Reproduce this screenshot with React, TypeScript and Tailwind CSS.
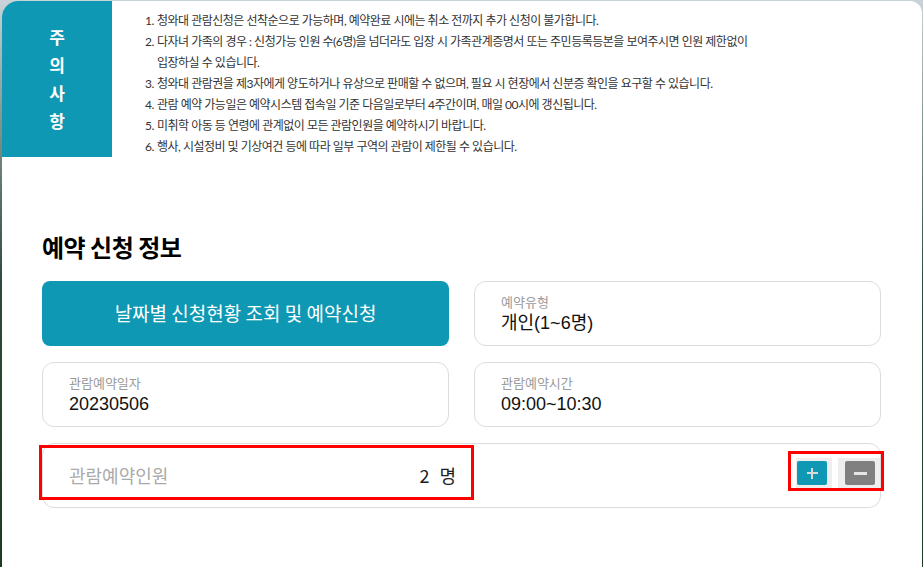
import React from "react";

const notices = [
  "청와대 관람신청은 선착순으로 가능하며, 예약완료 시에는 취소 전까지 추가 신청이 불가합니다.",
  "다자녀 가족의 경우 : 신청가능 인원 수(6명)을 넘더라도 입장 시 가족관계증명서 또는 주민등록등본을 보여주시면 인원 제한없이 입장하실 수 있습니다.",
  "청와대 관람권을 제3자에게 양도하거나 유상으로 판매할 수 없으며, 필요 시 현장에서 신분증 확인을 요구할 수 있습니다.",
  "관람 예약 가능일은 예약시스템 접속일 기준 다음일로부터 4주간이며, 매일 00시에 갱신됩니다.",
  "미취학 아동 등 연령에 관계없이 모든 관람인원을 예약하시기 바랍니다.",
  "행사, 시설정비 및 기상여건 등에 따라 일부 구역의 관람이 제한될 수 있습니다.",
];

function InfoCard({ label, value }: { label: string; value: string }) {
  return (
    <div className="h-[65px] rounded-xl border border-[#dcdcdc] bg-white pl-[26px] pt-[11px]">
      <div className="text-[13px] leading-[18px] text-[#9a9a9a]">{label}</div>
      <div
        className="text-[18px] leading-[25px] text-[#111]"
        style={{ fontFamily: '"Liberation Sans", "Noto Sans CJK KR", sans-serif' }}
      >
        {value}
      </div>
    </div>
  );
}

export default function App() {
  return (
    <div
      className="h-[567px] w-[923px] overflow-hidden bg-gradient-to-b from-[#c9d3d8] via-[#2f4a3a] to-[#1f3a22] pl-[2px] pr-[1px] pt-[1px]"
      style={{ fontFamily: '"Noto Sans CJK KR", "Liberation Sans", sans-serif' }}
    >
      <div className="h-full overflow-hidden rounded-tl-[16px] rounded-tr-[12px] bg-white">
        {/* 주의사항 */}
        <div className="flex">
          <div className="flex h-[156px] w-[110px] shrink-0 flex-col items-center justify-center bg-[#0e98b3] text-[17px] font-bold leading-[28px] text-white">
            <span>주</span>
            <span>의</span>
            <span>사</span>
            <span>항</span>
          </div>
          <ol
            className="pl-[33px] pt-[9px] text-[12px] leading-[21px] tracking-[-0.5px] text-[#333]"
            style={{ fontFamily: 'Lato, "Noto Sans CJK KR", sans-serif' }}
          >
            {notices.map((n, i) => (
              <li key={i} className="flex">
                <span className="w-[12px] shrink-0">{i + 1}.</span>
                <span className="max-w-[600px]">{n}</span>
              </li>
            ))}
          </ol>
        </div>

        {/* 예약 신청 정보 */}
        <div className="pl-[40px] pr-[41px]">
          <h2 className="mt-[74px] text-[24px] font-bold leading-[32px] tracking-[-0.5px] text-black">
            예약 신청 정보
          </h2>
          <div className="mt-[18px] grid grid-cols-2 gap-x-[25px] gap-y-[16px]">
            <button className="flex h-[65px] items-center justify-center rounded-lg bg-[#0e98b3] text-[19px] text-white">
              날짜별 신청현황 조회 및 예약신청
            </button>
            <InfoCard label="예약유형" value="개인(1~6명)" />
            <InfoCard label="관람예약일자" value="20230506" />
            <InfoCard label="관람예약시간" value="09:00~10:30" />
            <div className="col-span-2 flex h-[65px] items-center rounded-xl border border-[#dcdcdc] bg-white">
              <div className="relative flex h-full w-[430px] items-center pl-[26px] pr-[17px]">
                <span className="text-[18px] text-[#aaa]">관람예약인원</span>
                <span className="ml-auto flex gap-[10px] text-[18px] text-[#222]">
                  <span>2</span>
                  <span>명</span>
                </span>
                <div className="pointer-events-none absolute left-[-4px] top-[1px] h-[55px] w-[435px] border-[3px] border-[#f00]" />
              </div>
              <div className="relative mb-[5px] ml-auto flex gap-[6px]">
                <div className="flex h-[30px] w-[36px] items-center bg-[#eee] pl-[1px]">
                  <button className="relative flex h-[24px] w-[30px] items-center justify-center rounded-[2px] bg-[#0e98b3]">
                    <span className="absolute h-[2px] w-[11px] bg-[#d9d9d9]" />
                    <span className="absolute h-[11px] w-[2px] bg-[#d9d9d9]" />
                  </button>
                </div>
                <div className="flex h-[30px] w-[42px] items-center justify-end bg-[#eee] pr-[5px]">
                  <button className="flex h-[24px] w-[30px] items-center justify-center rounded-[2px] bg-[#808080]">
                    <span className="block h-[3px] w-[13px] bg-[#e6e6e6]" />
                  </button>
                </div>
                <div className="pointer-events-none absolute -left-[8px] -top-[7px] h-[40px] w-[96px] border-[3px] border-[#f00]" />
              </div>
            </div>
          </div>
        </div>
      </div>
    </div>
  );
}
